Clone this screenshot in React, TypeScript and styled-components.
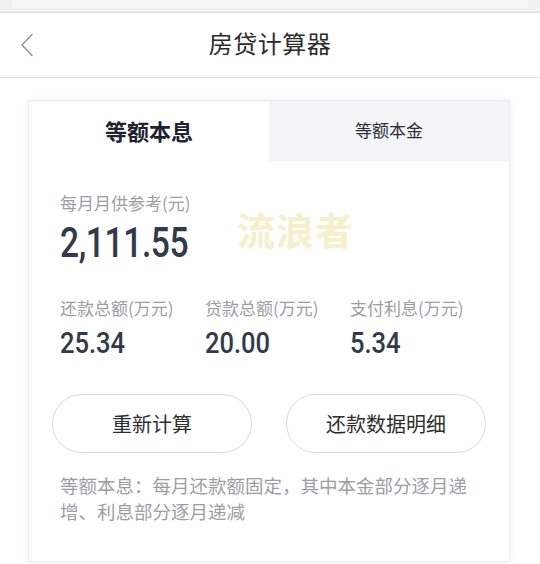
import React from 'react';
import styled, {createGlobalStyle} from "styled-components";

const GlobalStyle = createGlobalStyle`
    html, body {
        margin: 0;
        padding: 0;
        background: #ffffff;
    }

    body {
        font-family: "Noto Sans CJK SC", "Noto Sans", sans-serif;
        color: #333;
    }

    * {
        box-sizing: border-box;
    }
`

const stats = [
    {label: "还款总额(万元)", value: "25.34"},
    {label: "贷款总额(万元)", value: "20.00"},
    {label: "支付利息(万元)", value: "5.34"},
]

export default function App() {
    return (
        <Screen>
            <GlobalStyle/>
            <TopStrip>
                <StripBar/>
            </TopStrip>
            <Header>
                <BackButton aria-label="back">
                    <svg width="14" height="24" viewBox="0 0 14 24" fill="none">
                        <path d="M12 1.5L2 12L12 22.5" stroke="#9a9a9a" strokeWidth="1.6"
                              strokeLinecap="round" strokeLinejoin="round"/>
                    </svg>
                </BackButton>
                <Title>房贷计算器</Title>
            </Header>
            <Page>
                <Card>
                    <Tabs>
                        <Tab active>等额本息</Tab>
                        <Tab>等额本金</Tab>
                    </Tabs>
                    <Summary>
                        <Watermark>流浪者</Watermark>
                        <Label>每月月供参考(元)</Label>
                        <Amount>2,111.55</Amount>
                        <StatsGrid>
                            {stats.map(item => (
                                <Stat key={item.label}>
                                    <Label>{item.label}</Label>
                                    <StatValue>{item.value}</StatValue>
                                </Stat>
                            ))}
                        </StatsGrid>
                    </Summary>
                    <ButtonRow>
                        <PillButton>重新计算</PillButton>
                        <PillButton>还款数据明细</PillButton>
                    </ButtonRow>
                    <Note>等额本息：每月还款额固定，其中本金部分逐月递增、利息部分逐月递减</Note>
                </Card>
            </Page>
        </Screen>
    );
}

const Screen = styled.div`
    width: 540px;
    min-height: 564px;
    background: #ffffff;
`

const TopStrip = styled.div`
    height: 13px;
    background: #f1f1f1;
    border-bottom: 1px solid #dedede;
    padding: 0 12px;
`

const StripBar = styled.div`
    height: 8px;
    background: #f8f8f8;
    border-radius: 0 0 3px 3px;
`

const Header = styled.header`
    position: relative;
    height: 65px;
    display: flex;
    align-items: center;
    justify-content: center;
    padding-bottom: 5px;
    border-bottom: 1px solid #e4e4e4;
    background: #fff;
`

const BackButton = styled.div`
    position: absolute;
    left: 20px;
    top: 20px;
    display: flex;
`

const Title = styled.h1`
    margin: 0;
    font-size: 24px;
    font-weight: 400;
    color: #2b2b2b;
    letter-spacing: 0.5px;
`

const Page = styled.main`
    padding: 22px 30px 0 28px;
`

const Card = styled.section`
    border: 1px solid #ececec;
    box-shadow: 0 0 8px rgba(0, 0, 0, 0.06);
    background: #fff;
    padding-bottom: 37px;
`

const Tabs = styled.div`
    display: grid;
    grid-template-columns: 1fr 1fr;
    height: 60px;
`

const Tab = styled.div<{ active?: boolean }>`
    display: flex;
    align-items: center;
    justify-content: center;
    padding-bottom: 3px;
    background: ${p => p.active ? "#ffffff" : "#f4f5f7"};
    color: ${p => p.active ? "#1f2330" : "#2a2e38"};
    font-size: ${p => p.active ? "22px" : "17px"};
    font-weight: ${p => p.active ? 700 : 400};
`

const Summary = styled.div`
    position: relative;
    padding: 30px 31px 0;
`

const Watermark = styled.div`
    position: absolute;
    left: 208px;
    top: 40px;
    font-size: 38px;
    font-weight: 700;
    color: #f6eecd;
    letter-spacing: 1px;
    pointer-events: none;
`

const Label = styled.div`
    position: relative;
    font-size: 17px;
    line-height: 24px;
    color: #9c9ea4;
`

const Amount = styled.div`
    position: relative;
    display: inline-block;
    margin-top: 5px;
    font-family: "Roboto", "Liberation Sans", sans-serif;
    font-size: 42px;
    line-height: 46px;
    font-weight: 500;
    letter-spacing: -0.5px;
    color: #323a49;
    transform: scaleX(0.8);
    transform-origin: left center;
`

const StatsGrid = styled.div`
    display: grid;
    grid-template-columns: repeat(3, 145px);
    margin-top: 30px;
`

const Stat = styled.div`
    display: flex;
    flex-direction: column;
    align-items: flex-start;
    gap: 7px;
`

const StatValue = styled.div`
    display: inline-block;
    font-family: "Roboto", "Liberation Sans", sans-serif;
    font-size: 29px;
    line-height: 32px;
    font-weight: 500;
    color: #323a49;
    transform: scaleX(0.88);
    transform-origin: left center;
`

const ButtonRow = styled.div`
    display: flex;
    justify-content: space-between;
    padding: 0 23px;
    margin-top: 35px;
`

const PillButton = styled.button`
    width: 200px;
    height: 59px;
    border: 1px solid #d9d9d9;
    border-radius: 30px;
    background: #fff;
    font-family: "Noto Sans CJK SC", sans-serif;
    font-size: 20px;
    color: #2e2e2e;
`

const Note = styled.p`
    margin: 19px 0 0;
    padding: 0 31px;
    font-size: 18.5px;
    line-height: 26px;
    color: #9c9ea4;
`
